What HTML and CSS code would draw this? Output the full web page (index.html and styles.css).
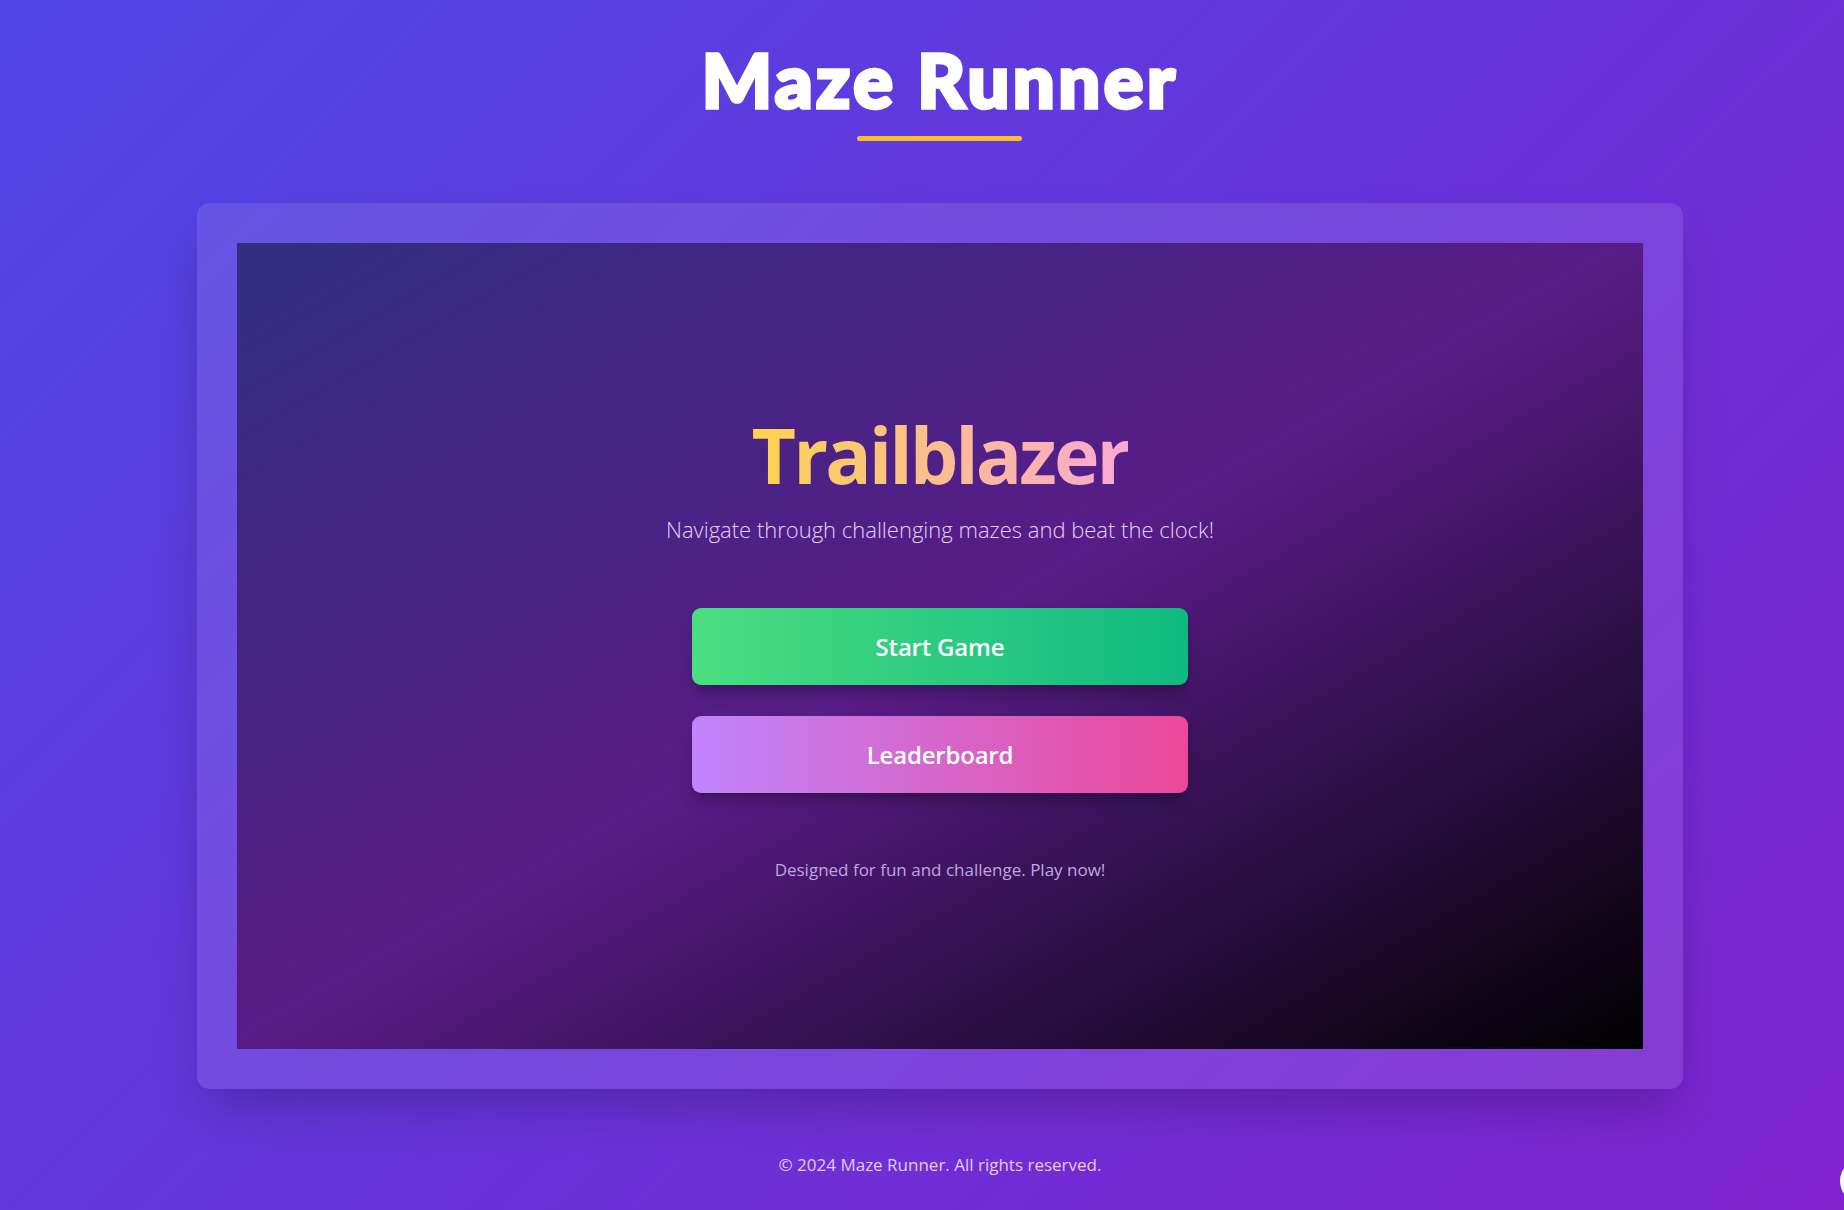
FILE: index.html
```html
<!DOCTYPE html>
<html lang="en">
<head>
<meta charset="utf-8">
<title>Maze Runner</title>
<link rel="stylesheet" href="styles.css">
</head>
<body>
<div class="page">
  <header class="header">
    <h1 class="title">Maze Runner</h1>
    <div class="title-bar"></div>
  </header>
  <main class="card">
    <div class="stage">
      <h2 class="game-title">Trailblazer</h2>
      <p class="tagline">Navigate through challenging mazes and beat the clock!</p>
      <div class="actions">
        <button class="btn btn-start">Start Game</button>
        <button class="btn btn-board">Leaderboard</button>
      </div>
      <p class="note">Designed for fun and challenge. Play now!</p>
    </div>
  </main>
  <footer class="footer">© 2024 Maze Runner. All rights reserved.</footer>
</div>
<div class="fab"></div>
</body>
</html>
```

FILE: styles.css
```css
html, body {
  margin: 0;
  padding: 0;
}
body {
  min-height: 1210px;
  background: linear-gradient(135deg, #4f46e5 0%, #7e22ce 100%);
  font-family: "Open Sans", "Noto Sans", sans-serif;
  overflow: hidden;
  position: relative;
}
.page {
  box-sizing: border-box;
  width: 1844px;
  padding-left: 36px;
  display: flex;
  flex-direction: column;
  align-items: center;
}
.header {
  display: flex;
  flex-direction: column;
  align-items: center;
  padding-top: 36px;
}
.title {
  margin: 0;
  font-family: Lato, "Open Sans", sans-serif;
  font-weight: 900;
  font-size: 74px;
  line-height: 88px;
  color: #ffffff;
  letter-spacing: 3.5px;
  -webkit-text-stroke: 3.5px #ffffff;
}
.title-bar {
  width: 165px;
  height: 5px;
  border-radius: 3px;
  background: #fbbf24;
  margin-top: 12px;
}
.card {
  margin-top: 62px;
  width: 1486px;
  box-sizing: border-box;
  padding: 40px;
  border-radius: 13px;
  background: rgba(255, 255, 255, 0.1);
  box-shadow: 0 25px 50px -12px rgba(0, 0, 0, 0.25);
}
.stage {
  height: 806px;
  background: linear-gradient(to bottom right, #312e81 0%, #581c87 50%, #000000 100%);
  display: flex;
  flex-direction: column;
  align-items: center;
  padding-top: 164px;
  box-sizing: border-box;
}
.game-title {
  margin: 0;
  font-size: 77px;
  line-height: 96px;
  font-weight: 700;
  letter-spacing: -3px;
  background: linear-gradient(to right, #fcd34d, #f9a8d4);
  -webkit-background-clip: text;
  background-clip: text;
  color: transparent;
}
.tagline {
  margin: 10px 0 0;
  font-size: 22px;
  line-height: 32px;
  font-weight: 300;
  color: #e3d2f8;
}
.actions {
  margin-top: 63px;
  display: flex;
  flex-direction: column;
  gap: 31px;
  width: 496px;
}
.btn {
  border: 0;
  border-radius: 9px;
  height: 77px;
  font-family: "Open Sans", "Noto Sans", sans-serif;
  font-size: 24px;
  font-weight: 600;
  color: #ffffff;
  letter-spacing: -0.2px;
  box-shadow: 0 10px 15px -3px rgba(0, 0, 0, 0.25), 0 4px 6px -4px rgba(0, 0, 0, 0.2);
}
.btn-start {
  background: linear-gradient(to right, #4ade80, #10b981);
}
.btn-board {
  background: linear-gradient(to right, #c084fc, #ec4899);
}
.note {
  margin: 63px 0 0;
  font-size: 17px;
  line-height: 28px;
  color: #c0a6e0;
}
.footer {
  margin-top: 62px;
  font-size: 17px;
  line-height: 28px;
  color: #e2cdfb;
}
.fab {
  position: absolute;
  left: 1840px;
  top: 1159px;
  width: 44px;
  height: 44px;
  border-radius: 50%;
  background: #ffffff;
}
```
